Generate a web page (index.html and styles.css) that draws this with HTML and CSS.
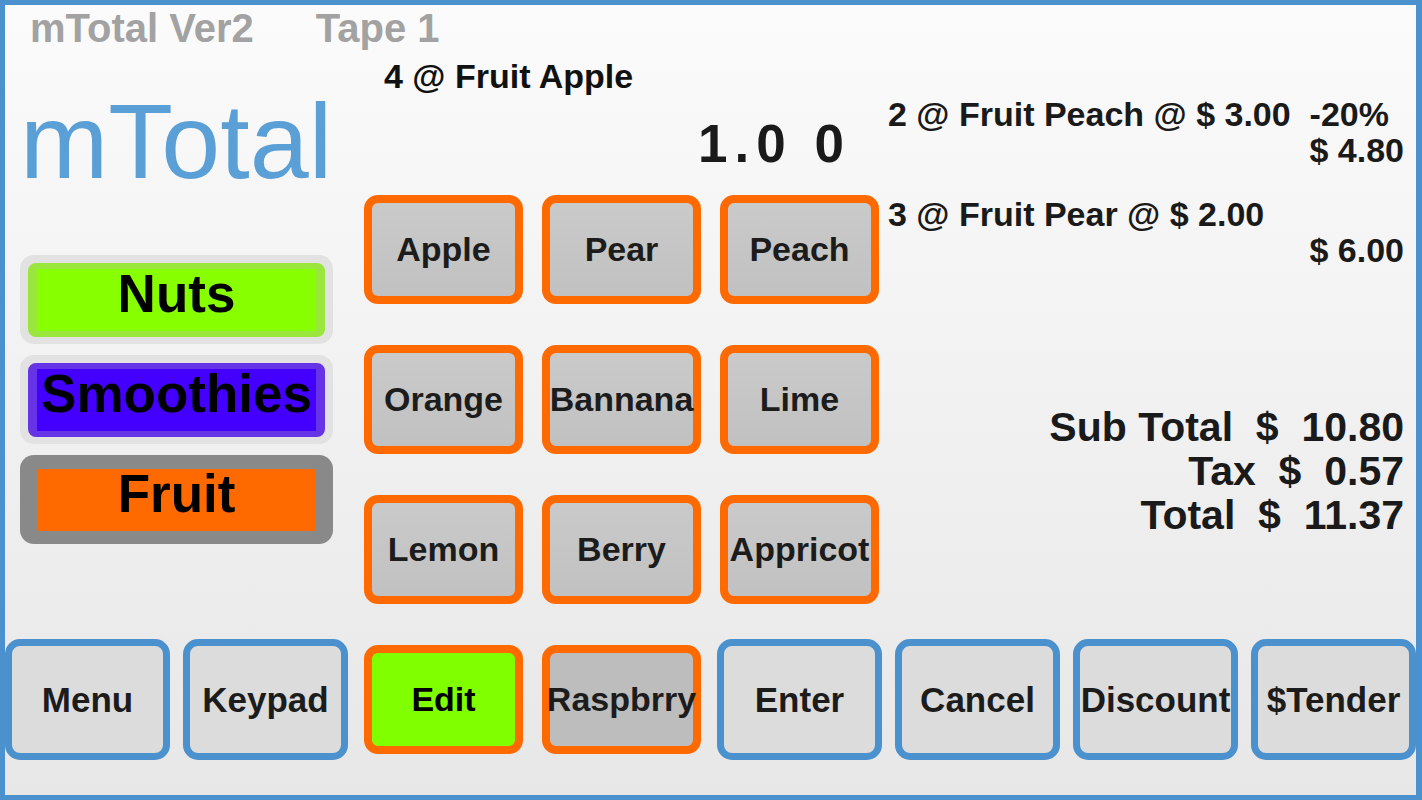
FILE: index.html
```html
<!DOCTYPE html>
<html lang="en">
<head>
<meta charset="utf-8">
<title>mTotal</title>
<link rel="stylesheet" href="styles.css">
</head>
<body>
<div class="screen">
  <section class="left">
    <header class="title-bar"><span>mTotal Ver2</span><span>Tape 1</span></header>
    <div class="logo">mTotal</div>
    <div class="categories">
      <div class="cat cat-nuts"><div class="cat-face">Nuts</div></div>
      <div class="cat cat-smoothies"><div class="cat-face">Smoothies</div></div>
      <div class="cat cat-fruit"><div class="cat-face">Fruit</div></div>
    </div>
  </section>

  <section class="display">
    <div class="entry">4 @ Fruit Apple</div>
    <div class="amount">1.0 0</div>
  </section>

  <section class="products">
    <div class="key key-orange">Apple</div>
    <div class="key key-orange">Pear</div>
    <div class="key key-orange">Peach</div>
    <div class="key key-orange">Orange</div>
    <div class="key key-orange">Bannana</div>
    <div class="key key-orange">Lime</div>
    <div class="key key-orange">Lemon</div>
    <div class="key key-orange">Berry</div>
    <div class="key key-orange">Appricot</div>
  </section>

  <section class="receipt">
    <div class="item">
      <div class="item-desc">2 @ Fruit Peach @ $ 3.00&nbsp; -20%</div>
      <div class="item-price">$ 4.80</div>
    </div>
    <div class="item">
      <div class="item-desc">3 @ Fruit Pear @ $ 2.00</div>
      <div class="item-price">$ 6.00</div>
    </div>
    <div class="totals">
      <div>Sub Total&nbsp; $&nbsp; 10.80</div>
      <div>Tax&nbsp; $&nbsp; 0.57</div>
      <div>Total&nbsp; $&nbsp; 11.37</div>
    </div>
  </section>

  <nav class="actions">
    <div class="key key-blue">Menu</div>
    <div class="key key-blue">Keypad</div>
    <div class="key key-orange key-green">Edit</div>
    <div class="key key-orange key-gray">Raspbrry</div>
    <div class="key key-blue">Enter</div>
    <div class="key key-blue">Cancel</div>
    <div class="key key-blue">Discount</div>
    <div class="key key-blue">$Tender</div>
  </nav>
</div>
</body>
</html>
```

FILE: styles.css
```css
* {
  box-sizing: border-box;
}

html, body {
  margin: 0;
  padding: 0;
}

body {
  font-family: "Liberation Sans", Arial, sans-serif;
  color: #1b1b1b;
}

.screen {
  width: 1422px;
  height: 800px;
  border-style: solid;
  border-color: #4b91cd;
  border-width: 5px 6px 5px 5px;
  background: linear-gradient(#fbfbfb, #e7e7e7);
  display: grid;
  grid-template-columns: repeat(8, 165px);
  grid-template-rows: 155px 121px 121px 121px 121px;
  column-gap: 13px;
  row-gap: 29px;
  overflow: hidden;
}

/* ---------- left column ---------- */
.left {
  grid-column: 1 / 3;
  grid-row: 1 / 5;
  display: flex;
  flex-direction: column;
}

.title-bar {
  display: flex;
  gap: 62px;
  padding-left: 25px;
  height: 46px;
  line-height: 46px;
  font-size: 40px;
  font-weight: bold;
  color: #a2a2a2;
  white-space: nowrap;
}

.logo {
  margin-top: 38px;
  padding-left: 15px;
  font-size: 106px;
  line-height: 104px;
  color: #5a9fd6;
  white-space: nowrap;
}

.categories {
  margin-top: 62px;
  padding: 0 15px;
  display: flex;
  flex-direction: column;
  gap: 11px;
}

.cat {
  height: 89px;
  border-radius: 14px;
  padding: 8px 8px 7px;
  background: #e2e2e2;
}

.cat-face {
  height: 100%;
  border-style: solid;
  border-width: 6px 9px;
  border-radius: 8px;
  display: flex;
  align-items: center;
  justify-content: center;
  padding-bottom: 13px;
  font-size: 53px;
  line-height: 1;
  font-weight: bold;
  color: #000;
  white-space: nowrap;
}

.cat-nuts .cat-face {
  border-color: #9ae63c;
  background: #88ff00;
}

.cat-smoothies .cat-face {
  border-color: #6633e6;
  background: #4400ff;
}

.cat-fruit {
  background: #898989;
}

.cat-fruit .cat-face {
  border-color: #898989;
  border-radius: 0;
  background: #ff6a00;
}

/* ---------- centre display ---------- */
.display {
  grid-column: 3 / 6;
  grid-row: 1;
  padding: 53px 0 0 23px;
}

.entry {
  font-size: 34px;
  line-height: 36px;
  font-weight: bold;
  white-space: nowrap;
  color: #111;
}

.amount {
  margin-top: 23px;
  padding-right: 31px;
  font-size: 53px;
  line-height: 54px;
  font-weight: bold;
  letter-spacing: 7px;
  text-align: right;
  white-space: pre;
  color: #1a1a1a;
}

/* ---------- product keys ---------- */
.products {
  grid-column: 3 / 6;
  grid-row: 2 / 5;
  display: grid;
  grid-template-columns: repeat(3, 165px);
  grid-auto-rows: 121px;
  column-gap: 13px;
  row-gap: 29px;
}

.key {
  display: flex;
  align-items: center;
  justify-content: center;
  font-weight: bold;
  white-space: nowrap;
  color: #1c1c1c;
}

.key-orange {
  margin: 6px 3px;
  border: 8px solid #ff6a00;
  border-radius: 14px;
  background: linear-gradient(#cacaca, #c1c1c1);
  font-size: 34px;
}

/* ---------- receipt ---------- */
.receipt {
  grid-column: 6 / 9;
  grid-row: 1 / 5;
  margin-left: -7px;
  padding: 91px 12px 0 0;
  display: flex;
  flex-direction: column;
  font-weight: bold;
  color: #1a1a1a;
  white-space: nowrap;
}

.item {
  font-size: 34px;
  line-height: 36px;
}

.item + .item {
  margin-top: 28px;
}

.item-price {
  text-align: right;
}

.totals {
  margin-top: 137px;
  font-size: 41px;
  line-height: 44px;
  text-align: right;
}

/* ---------- bottom action bar ---------- */
.actions {
  grid-column: 1 / 9;
  grid-row: 5;
  display: grid;
  grid-template-columns: repeat(8, 165px);
  column-gap: 13px;
}

.key-blue {
  border: 7px solid #4b91cd;
  border-radius: 15px;
  background: #dcdcdc;
  font-size: 35px;
}

.key-green {
  background: #80ff00;
  color: #000;
}

.key-gray {
  background: #bdbdbd;
}
```
